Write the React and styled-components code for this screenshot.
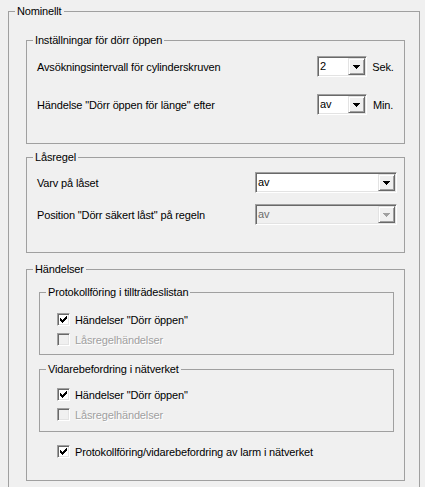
import React from 'react';
import styled, { createGlobalStyle } from 'styled-components';

const GlobalStyle = createGlobalStyle`
  html, body {
    margin: 0;
    background: #f0f0f0;
  }
  body {
    font-family: "Liberation Sans", Arial, sans-serif;
    font-size: 11px;
    letter-spacing: -0.15px;
    color: #000;
  }
`;

const Page = styled.div`
  box-sizing: border-box;
  width: 425px;
  height: 487px;
  overflow: hidden;
  padding: 5px 5px 0 8px;
`;

const Group = styled.fieldset`
  margin: ${(p) => p.$mt || 0}px 0 0 0;
  padding: 0;
  min-width: 0;
  border: 1px solid #a0a0a0;
`;

const Legend = styled.legend`
  margin-left: 6px;
  padding: 0 2px;
  font-size: 11px;
  line-height: 13px;
`;

const Body = styled.div`
  padding: ${(p) => p.$pad};
`;

const FieldRow = styled.div`
  display: grid;
  grid-template-columns: ${(p) => p.$label}px auto auto;
  align-items: center;
  height: 21px;
  margin-top: ${(p) => p.$mt || 0}px;
`;

const Label = styled.span`
  white-space: nowrap;
  color: ${(p) => (p.$disabled ? '#a0a0a0' : '#000')};
  text-shadow: ${(p) => (p.$disabled ? '1px 1px 0 #fff' : 'none')};
`;

const Unit = styled.span`
  margin-left: 5px;
`;

const Combo = styled.div`
  box-sizing: border-box;
  width: ${(p) => p.$w}px;
  height: 21px;
  padding: 1px;
  display: flex;
  border: 1px solid;
  border-color: #a0a0a0 #fff #fff #a0a0a0;
  box-shadow: inset 1px 1px 0 #696969, inset -1px -1px 0 #e3e3e3;
  background: ${(p) => (p.$disabled ? '#f0f0f0' : '#fff')};
`;

const ComboText = styled.span`
  flex: 1;
  padding-left: 1px;
  line-height: 17px;
  color: ${(p) => (p.$disabled ? '#6d6d6d' : '#000')};
`;

const DropButton = styled.div`
  box-sizing: border-box;
  width: 17px;
  height: 17px;
  display: flex;
  align-items: center;
  justify-content: center;
  background: #f0f0f0;
  border: 1px solid;
  border-color: #e3e3e3 #696969 #696969 #e3e3e3;
  box-shadow: inset 1px 1px 0 #fff, inset -1px -1px 0 #a0a0a0;
`;

const CheckRow = styled.label`
  display: flex;
  align-items: center;
  height: 13px;
  gap: 5px;
  margin: ${(p) => p.$m || '0'};
`;

const Box = styled.span`
  box-sizing: border-box;
  width: 13px;
  height: 13px;
  flex: none;
  display: flex;
  align-items: center;
  justify-content: center;
  border: 1px solid;
  border-color: #a0a0a0 #fff #fff #a0a0a0;
  box-shadow: inset 1px 1px 0 #696969, inset -1px -1px 0 #e3e3e3;
  background: ${(p) => (p.$disabled ? '#f0f0f0' : '#fff')};
`;

const Arrow = ({ disabled }) => (
  <svg width="7" height="4" viewBox="0 0 7 4" shapeRendering="crispEdges">
    <path
      d="M0 0h7v1H0z M1 1h5v1H1z M2 2h3v1H2z M3 3h1v1H3z"
      fill={disabled ? '#a0a0a0' : '#000'}
    />
  </svg>
);

const Tick = () => (
  <svg width="7" height="7" viewBox="0 0 7 7" shapeRendering="crispEdges">
    <path
      d="M6 0h1v1H6z M5 1h2v1H5z M0 2h1v1H0z M4 2h3v1H4z M0 3h2v1H0z M3 3h3v1H3z M0 4h5v1H0z M1 5h3v1H1z M2 6h1v1H2z"
      fill="#000"
    />
  </svg>
);

const Select = ({ value, width, disabled }) => (
  <Combo $w={width} $disabled={disabled}>
    <ComboText $disabled={disabled}>{value}</ComboText>
    <DropButton>
      <Arrow disabled={disabled} />
    </DropButton>
  </Combo>
);

const Check = ({ checked, disabled, children, m }) => (
  <CheckRow $m={m}>
    <Box $disabled={disabled}>{checked && <Tick />}</Box>
    <Label $disabled={disabled}>{children}</Label>
  </CheckRow>
);

export default function App() {
  return (
    <Page>
      <GlobalStyle />
      <Group>
        <Legend>Nominellt</Legend>
        <Body $pad="16px 14px 40px 17px">
          <Group>
            <Legend>Inställningar för dörr öppen</Legend>
            <Body $pad="9px 10px 28px 10px">
              <FieldRow $label={280}>
                <Label>Avsökningsintervall för cylinderskruven</Label>
                <Select value="2" width={50} />
                <Unit>Sek.</Unit>
              </FieldRow>
              <FieldRow $label={280} $mt={17}>
                <Label>Händelse "Dörr öppen för länge" efter</Label>
                <Select value="av" width={50} />
                <Unit>Min.</Unit>
              </FieldRow>
            </Body>
          </Group>

          <Group $mt={7}>
            <Legend>Låsregel</Legend>
            <Body $pad="8px 10px 27px 10px">
              <FieldRow $label={218}>
                <Label>Varv på låset</Label>
                <Select value="av" width={142} />
              </FieldRow>
              <FieldRow $label={218} $mt={11}>
                <Label>Position "Dörr säkert låst" på regeln</Label>
                <Select value="av" width={142} disabled />
              </FieldRow>
            </Body>
          </Group>

          <Group $mt={10}>
            <Legend>Händelser</Legend>
            <Body $pad="10px 10px 22px 12px">
              <Group>
                <Legend>Protokollföring i tillträdeslistan</Legend>
                <Body $pad="14px 10px 8px 17px">
                  <Check checked>Händelser "Dörr öppen"</Check>
                  <Check disabled m="7px 0 0 0">
                    Låsregelhändelser
                  </Check>
                </Body>
              </Group>

              <Group $mt={8}>
                <Legend>Vidarebefordring i nätverket</Legend>
                <Body $pad="12px 10px 10px 17px">
                  <Check checked>Händelser "Dörr öppen"</Check>
                  <Check disabled m="7px 0 0 0">
                    Låsregelhändelser
                  </Check>
                </Body>
              </Group>

              <Check checked m="13px 0 0 18px">
                Protokollföring/vidarebefordring av larm i nätverket
              </Check>
            </Body>
          </Group>
        </Body>
      </Group>
    </Page>
  );
}
